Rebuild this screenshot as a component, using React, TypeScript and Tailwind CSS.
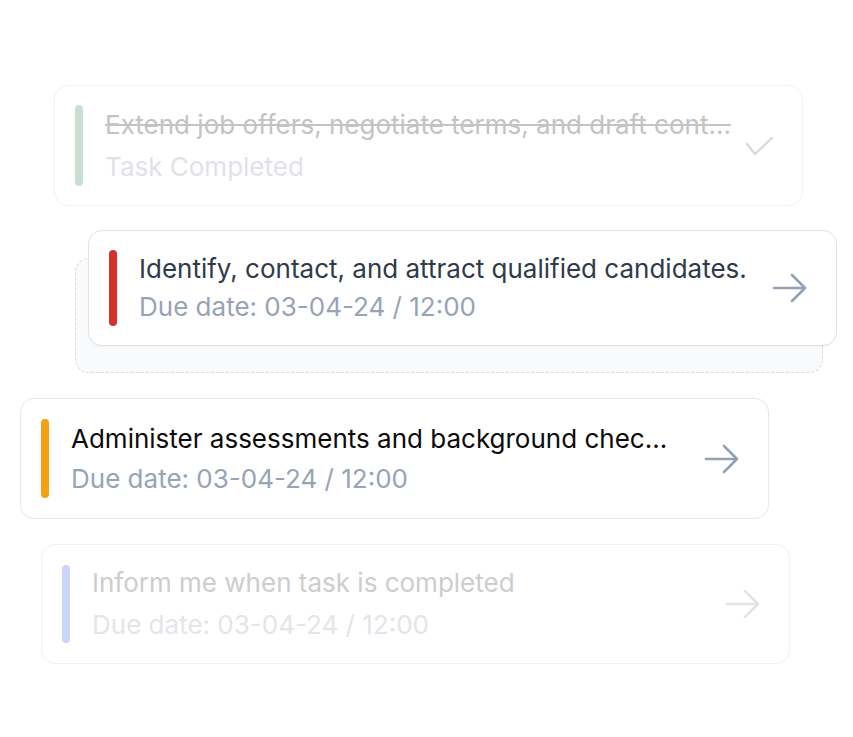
import React from 'react';

type Tone = 'done' | 'active' | 'normal' | 'muted';

interface TaskCardProps {
  title: string;
  subtitle: string;
  bar: string;
  tone: Tone;
  icon: 'check' | 'arrow';
  className?: string;
  textClassName?: string;
}

function ArrowIcon({ color }: { color: string }) {
  return (
    <svg width="36" height="30" viewBox="0 0 36 30" fill="none">
      <path
        d="M2 15h31M20 2l13 13-13 13"
        stroke={color}
        strokeWidth="2.6"
        strokeLinecap="round"
        strokeLinejoin="round"
      />
    </svg>
  );
}

function CheckIcon({ color }: { color: string }) {
  return (
    <svg width="30" height="22" viewBox="0 0 30 22" fill="none">
      <path
        d="M3 9l8 10L28 3"
        stroke={color}
        strokeWidth="2.4"
        strokeLinecap="round"
        strokeLinejoin="round"
      />
    </svg>
  );
}

const TONES: Record<Tone, { card: string; title: string; sub: string; icon: string }> = {
  done: {
    card: 'border-[#f0f2f5]',
    title: 'text-[#c3c3c3] line-through decoration-[#c3c3c3]',
    sub: 'text-[#dfe2e8]',
    icon: '#d6d9df',
  },
  active: {
    card: 'border-[#dde3eb] shadow-[0_1px_2px_rgba(15,23,42,0.04)]',
    title: 'text-[#2f3a4a]',
    sub: 'text-[#97a3b6]',
    icon: '#94a0b4',
  },
  normal: {
    card: 'border-[#e2e7ee]',
    title: 'text-[#0b0b0b]',
    sub: 'text-[#97a3b6]',
    icon: '#94a0b4',
  },
  muted: {
    card: 'border-[#f0f2f5]',
    title: 'text-[#cdcdcd]',
    sub: 'text-[#e3e5ea]',
    icon: '#e0e3e8',
  },
};

function TaskCard({
  title,
  subtitle,
  bar,
  tone,
  icon,
  className = '',
  textClassName = 'leading-[40px]',
}: TaskCardProps) {
  const t = TONES[tone];
  return (
    <div
      className={`flex w-[749px] items-center rounded-[14px] border bg-white pl-[20px] pr-[28px] ${t.card} ${className}`}
    >
      <div className={`w-[8px] self-stretch rounded-full ${bar}`} />
      <div className={`flex flex-1 flex-col pl-[22px] text-[26px] ${textClassName}`}>
        <span className={`whitespace-nowrap ${t.title}`}>{title}</span>
        <span className={`whitespace-nowrap ${t.sub}`}>{subtitle}</span>
      </div>
      {icon === 'arrow' ? <ArrowIcon color={t.icon} /> : <CheckIcon color={t.icon} />}
    </div>
  );
}

export default function App() {
  return (
    <div
      className="flex min-h-[737px] w-[853px] flex-col gap-[25px] bg-white pt-[85px]"
      style={{ fontFamily: 'Inter, "Noto Sans", sans-serif' }}
    >
      <TaskCard
        className="ml-[54px] h-[121px] py-[19px]"
        textClassName="leading-[42px]"
        title="Extend job offers, negotiate terms, and draft cont..."
        subtitle="Task Completed"
        bar="bg-[#c9dfd1]"
        tone="done"
        icon="check"
      />

      {/* dragged card over its drop placeholder */}
      <div className="relative ml-[75px] -mt-[1px] pt-[28px]">
        <div className="h-[115px] w-[748px] rounded-[14px] border border-dashed border-[#d6dce6] bg-[#f8fafc]" />
        <TaskCard
          className="absolute left-[13px] top-0 h-[116px] w-[748px] py-[19px]"
          textClassName="leading-[38px]"
          title="Identify, contact, and attract qualified candidates."
          subtitle="Due date: 03-04-24 / 12:00"
          bar="bg-[#d8302a]"
          tone="active"
          icon="arrow"
        />
      </div>

      <TaskCard
        className="ml-[20px] h-[121px] py-[20px]"
        title="Administer assessments and background chec..."
        subtitle="Due date: 03-04-24 / 12:00"
        bar="bg-[#f5a011]"
        tone="normal"
        icon="arrow"
      />

      <TaskCard
        className="ml-[41px] h-[120px] py-[20px]"
        textClassName="leading-[42px]"
        title="Inform me when task is completed"
        subtitle="Due date: 03-04-24 / 12:00"
        bar="bg-[#cbd4f8]"
        tone="muted"
        icon="arrow"
      />
    </div>
  );
}
